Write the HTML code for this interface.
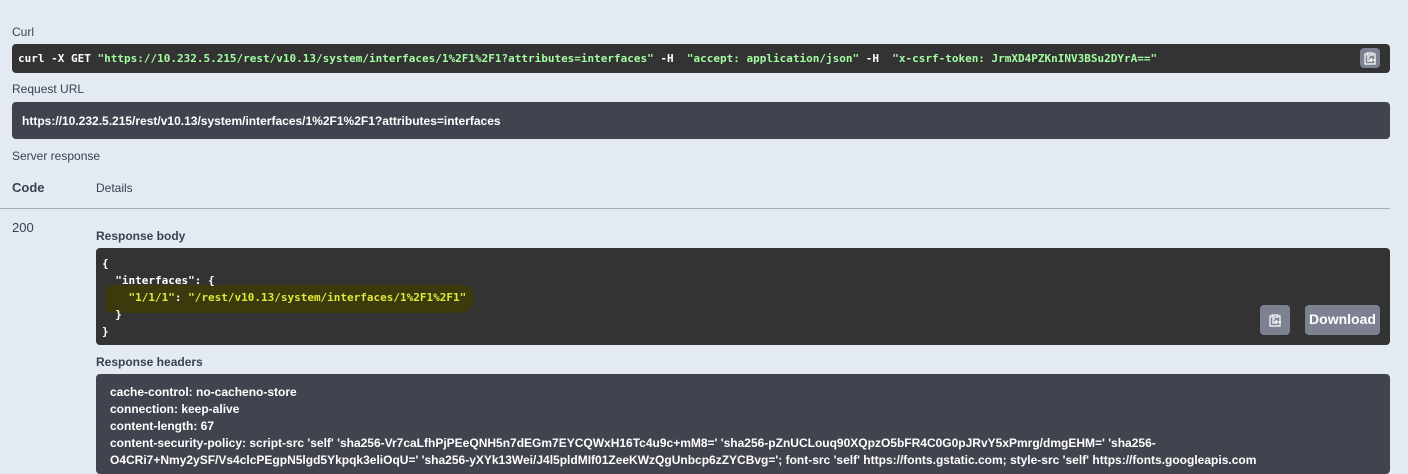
<!DOCTYPE html>
<html><head><style>
body{margin:0;width:1408px;height:462px;background:#e3eaf2;font-family:"Liberation Sans",sans-serif;position:relative;overflow:hidden;color:#3b4151}
.a{position:absolute}
.lbl{font-size:12px;color:#3b4151}
.mono{font-family:"DejaVu Sans Mono","Liberation Mono",monospace;font-weight:bold;font-size:11px;white-space:pre}
.btn{background:#7d8293;border-radius:4px}
</style></head><body>
<div class="a lbl" style="left:12px;top:25px">Curl</div>
<div class="a" style="left:12px;top:44px;width:1378px;height:29px;background:#333;border-radius:4px"></div>
<div class="a mono" style="left:18px;top:52px;color:#fff">curl -X GET <span style="color:#a2fca2">"https://10.232.5.215/rest/v10.13/system/interfaces/1%2F1%2F1?attributes=interfaces"</span> -H  <span style="color:#a2fca2">"accept: application/json"</span> -H  <span style="color:#a2fca2">"x-csrf-token: JrmXD4PZKnINV3BSu2DYrA=="</span></div>
<div class="a btn" style="left:1360px;top:48px;width:20px;height:20px"><svg width="20" height="20" viewBox="0 0 20 20"><path d="M7 5h6v2H7z M6 6H5v10h10V6h-1 M7 9h3 M7 11h2 M7 13h3 M10 12h6 M12 10l-2 2 2 2" stroke="#fff" stroke-width="1.2" fill="none"/></svg></div>
<div class="a lbl" style="left:12px;top:82px">Request URL</div>
<div class="a" style="left:12px;top:102px;width:1378px;height:37px;background:#41444e;border-radius:4px"></div>
<div class="a" style="left:22px;top:114px;color:#fff;font-weight:bold;font-size:12px">https://10.232.5.215/rest/v10.13/system/interfaces/1%2F1%2F1?attributes=interfaces</div>
<div class="a lbl" style="left:12px;top:149px">Server response</div>
<div class="a" style="left:12px;top:180px;font-size:13px;font-weight:bold">Code</div>
<div class="a lbl" style="left:96px;top:181px">Details</div>
<div class="a" style="left:0;top:208px;width:1390px;height:1px;background:#a8adb5"></div>
<div class="a" style="left:12px;top:220px;font-size:13px">200</div>
<div class="a lbl" style="left:96px;top:229px;font-weight:bold">Response body</div>
<div class="a" style="left:96px;top:248px;width:1294px;height:97px;background:#333;border-radius:4px"></div>
<div class="a" style="left:105px;top:285px;width:370px;height:28px;background:#3a3a0c;border-radius:10px 14px 18px 8px"></div>
<div class="a mono" style="left:102px;top:255px;color:#fff;line-height:17px">{
  "interfaces": {
    <span style="color:#e0e83a">"1/1/1"</span>: <span style="color:#e0e83a">"/rest/v10.13/system/interfaces/1%2F1%2F1"</span>
  }
}</div>
<div class="a btn" style="left:1260px;top:305px;width:30px;height:30px"><svg width="30" height="30" viewBox="-5 -5 30 30"><path d="M7 5h6v2H7z M6 6H5v10h10V6h-1 M7 9h3 M7 11h2 M7 13h3 M10 12h6 M12 10l-2 2 2 2" stroke="#fff" stroke-width="1.2" fill="none"/></svg></div>
<div class="a btn" style="left:1305px;top:305px;width:75px;height:30px;color:#fff;font-weight:bold;font-size:14px;line-height:28px;text-align:center">Download</div>
<div class="a lbl" style="left:96px;top:355px;font-weight:bold">Response headers</div>
<div class="a" style="left:96px;top:374px;width:1294px;height:100px;background:#41444e;border-radius:4px"></div>
<div class="a" style="left:110px;top:384px;color:#fff;font-weight:bold;font-size:12px;line-height:17px;white-space:nowrap">cache-control: no-cacheno-store<br>connection: keep-alive<br>content-length: 67<br>content-security-policy: script-src 'self' 'sha256-Vr7caLfhPjPEeQNH5n7dEGm7EYCQWxH16Tc4u9c+mM8=' 'sha256-pZnUCLouq90XQpzO5bFR4C0G0pJRvY5xPmrg/dmgEHM=' 'sha256-<br>O4CRi7+Nmy2ySF/Vs4clcPEgpN5lgd5Ykpqk3eliOqU=' 'sha256-yXYk13Wei/J4l5pldMIf01ZeeKWzQgUnbcp6zZYCBvg='; font-src 'self' https://fonts.gstatic.com; style-src 'self' https://fonts.googleapis.com</div>
</body></html>
